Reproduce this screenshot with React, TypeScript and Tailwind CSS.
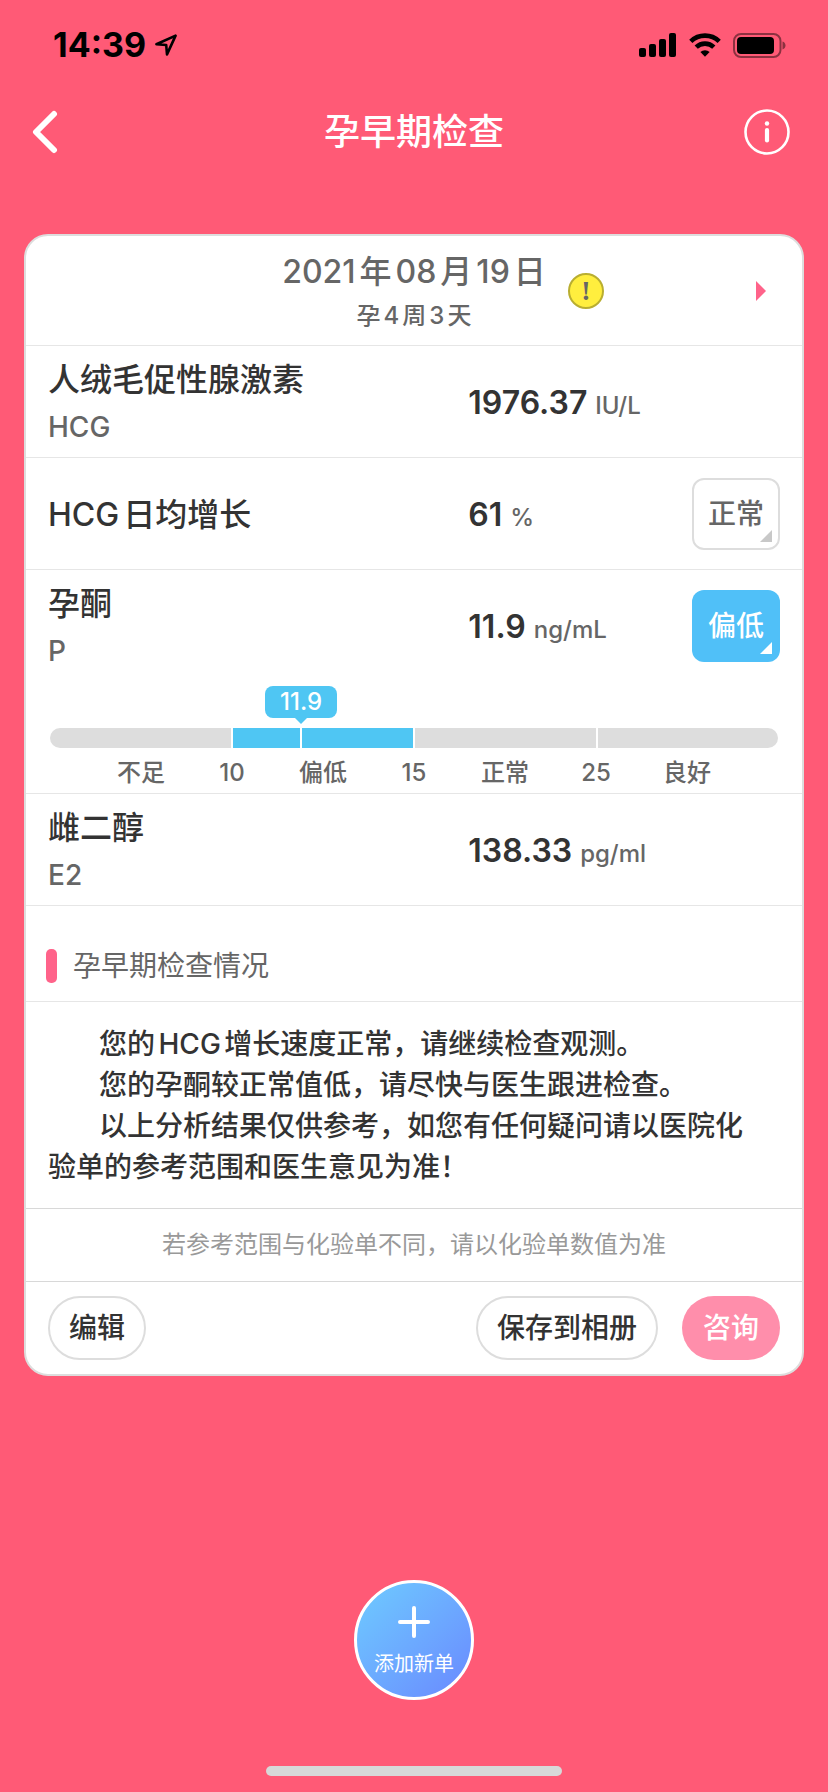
import clsx from 'clsx';
import type { ReactNode } from 'react';

type Level = 'normal' | 'low';

type Item = {
  name: string;
  code?: string;
  value: string;
  unit: string;
  level?: Level;
  label?: string;
};

const hcgItems: Item[] = [
  { name: '人绒毛促性腺激素', code: 'HCG', value: '1976.37', unit: 'IU/L' },
  { name: 'HCG日均增长', value: '61', unit: '%', level: 'normal', label: '正常' },
];

const progesterone: Item = {
  name: '孕酮',
  code: 'P',
  value: '11.9',
  unit: 'ng/mL',
  level: 'low',
  label: '偏低',
};

const estradiol: Item = { name: '雌二醇', code: 'E2', value: '138.33', unit: 'pg/ml' };

const scale = ['不足', '10', '偏低', '15', '正常', '25', '良好'];

function StatusBar() {
  return (
    <div className="flex h-[90px] items-center justify-between pl-[53px] pr-[42px] text-black">
      <div className="flex items-center gap-2">
        <span className="text-[34px] font-bold leading-none">14:39</span>
        <svg width="24" height="24" viewBox="0 0 24 24" fill="none" stroke="currentColor" strokeWidth="2.6" strokeLinejoin="round">
          <path d="M21.6 2.6 2.4 11.2l9.8 .8 .8 9.4Z" />
        </svg>
      </div>
      <div className="flex items-center gap-3">
        <svg width="38" height="24" viewBox="0 0 38 24" fill="currentColor">
          <rect x="0" y="15" width="7" height="9" rx="2" />
          <rect x="10" y="11" width="7" height="13" rx="2" />
          <rect x="20" y="6" width="7" height="18" rx="2" />
          <rect x="30" y="0" width="7" height="24" rx="2" />
        </svg>
        <svg width="32" height="24" viewBox="0 0 32 24" fill="none" stroke="currentColor" strokeWidth="4.6">
          <path d="M1.8 8.4a20.4 20.4 0 0 1 28.4 0" />
          <path d="M7.2 14.2a12.6 12.6 0 0 1 17.6 0" />
          <path d="M11.4 19a6.6 6.6 0 0 1 9.2 0L16 23.8Z" fill="currentColor" stroke="none" />
        </svg>
        <svg width="53" height="25" viewBox="0 0 53 25" fill="none">
          <rect x="1" y="1" width="46.5" height="23" rx="7" stroke="currentColor" strokeOpacity="0.45" strokeWidth="2" />
          <rect x="4" y="4" width="37" height="17" rx="4" fill="currentColor" />
          <path d="M49.5 8.5c2 .6 3 2.2 3 4s-1 3.4-3 4Z" fill="currentColor" fillOpacity="0.45" />
        </svg>
      </div>
    </div>
  );
}

function Header() {
  return (
    <header className="flex h-[84px] items-center justify-between px-8 text-white">
      <button type="button" aria-label="返回" className="flex w-[58px] justify-start">
        <svg width="26" height="44" viewBox="0 0 26 44" fill="none" stroke="currentColor" strokeWidth="6" strokeLinecap="round" strokeLinejoin="round">
          <path d="M22 4 4 22l18 18" />
        </svg>
      </button>
      <h1 className="text-4xl font-medium">孕早期检查</h1>
      <button type="button" aria-label="说明" className="flex w-[58px] justify-center">
        <svg width="46" height="46" viewBox="0 0 46 46" fill="none" stroke="currentColor">
          <circle cx="23" cy="23" r="21.5" strokeWidth="2.6" />
          <circle cx="23" cy="14.5" r="2.2" fill="currentColor" stroke="none" />
          <path d="M23 21v10.500" strokeWidth="4.2" strokeLinecap="round" />
        </svg>
      </button>
    </header>
  );
}

function LevelButton({ level, children }: { level: Level; children: ReactNode }) {
  return (
    <button
      type="button"
      className={clsx(
        'relative block h-[72px] w-[88px] rounded-xl text-[28px] font-medium',
        level === 'low' ? 'bg-[#50c0f8] text-white' : 'border-2 border-[#ddd] bg-white text-[#666]',
      )}
    >
      {children}
      <svg
        className={clsx('absolute', level === 'low' ? 'bottom-2 right-2' : 'bottom-1.5 right-1.5 text-[#c8c8c8]')}
        width="12"
        height="12"
        viewBox="0 0 12 12"
        fill="currentColor"
      >
        <path d="M12 0v12H0Z" />
      </svg>
    </button>
  );
}

function ItemRow({ item, noBorder }: { item: Item; noBorder?: boolean }) {
  return (
    <tr className={clsx('h-28', !noBorder && '[&>*]:border-b [&>*]:border-[#e6e6e6]')}>
      <th scope="row" className="pb-0 pl-[22px] pt-0.5 text-left font-medium">
        <div className="text-[32px] leading-[48px] text-[#333]">{item.name}</div>
        {item.code && <div className="text-[28px] leading-[46px] text-[#666]">{item.code}</div>}
      </th>
      <td className="pb-0 pt-0.5 text-[#666]">
        <span className="mr-2 text-[32px] font-semibold text-[#333]">{item.value}</span>
        <span className="text-2xl font-medium">{item.unit}</span>
      </td>
      <td className="py-0">{item.level && <LevelButton level={item.level}>{item.label}</LevelButton>}</td>
    </tr>
  );
}

function Gauge({ value }: { value: number }) {
  // cada tramo ocupa un cuarto; 偏低 va de 10 a 15
  const position = 25 + ((value - 10) / 5) * 25;

  return (
    <div className="px-6 pt-1">
      <div className="relative h-[42px]">
        <div
          className="absolute top-0 flex h-8 w-[72px] -translate-x-1/2 items-center justify-center rounded-lg bg-[#4fc6f3] text-2xl font-medium text-white"
          style={{ left: `${position}%` }}
        >
          {value}
          <svg className="absolute top-full" width="12" height="6" viewBox="0 0 12 6" fill="#4fc6f3">
            <path d="M0 0h12L6 6Z" />
          </svg>
        </div>
      </div>
      <div className="relative flex h-5 gap-0.5 overflow-hidden rounded-full">
        <div className="flex-1 bg-[#ddd]"></div>
        <div className="flex-1 bg-[#4fc6f3]"></div>
        <div className="flex-1 bg-[#ddd]"></div>
        <div className="flex-1 bg-[#ddd]"></div>
        <div className="absolute inset-y-0 w-0.5 -translate-x-1/2 bg-white" style={{ left: `${position}%` }}></div>
      </div>
      <div className="grid grid-cols-[repeat(16,1fr)] pt-1.5 text-2xl font-medium leading-[38px] text-[#666]">
        <span></span>
        {scale.map((text) => (
          <span key={text} className="col-span-2 whitespace-nowrap text-center">
            {text}
          </span>
        ))}
      </div>
    </div>
  );
}

function ReportCard() {
  return (
    <section className="rounded-[24px] border-2 border-[#ddd] bg-white">
      <div className="grid h-[110px] grid-cols-[1fr_auto_1fr] items-center border-b border-[#e6e6e6] text-[#666]">
        <span></span>
        <div className="pt-1 text-center font-medium">
          <div className="text-[32px] leading-[46px]">2021年08月19日</div>
          <div className="text-2xl leading-[42px]">孕4周3天</div>
        </div>
        <div className="flex items-center justify-between pl-[22px] pr-9">
          <button
            type="button"
            aria-label="提示"
            className="flex size-9 items-center justify-center rounded-full border-2 border-[#b9ae30] bg-[#ffee3e] font-['Liberation_Serif',serif] text-[28px] font-bold leading-none"
          >
            !
          </button>
          <button type="button" aria-label="下一张">
            <svg width="10" height="20" viewBox="0 0 10 20" fill="#ff638a">
              <path d="M0 0v20l10-10Z" />
            </svg>
          </button>
        </div>
      </div>

      <table className="w-full table-fixed border-separate border-spacing-0">
        <colgroup>
          <col className="w-[57%]" />
          <col />
          <col className="w-[110px]" />
        </colgroup>
        <tbody>
          {hcgItems.map((item) => (
            <ItemRow key={item.name} item={item} />
          ))}
          <ItemRow item={progesterone} noBorder />
          <tr className="h-28">
            <td colSpan={3} className="border-b border-[#e6e6e6] p-0 align-top">
              <Gauge value={11.9} />
            </td>
          </tr>
          <ItemRow item={estradiol} />
        </tbody>
      </table>

      <div className="flex h-24 items-center gap-4 border-b border-[#e6e6e6] pl-5 pt-6">
        <span className="h-[34px] w-[11px] rounded-[5px] bg-[#ff638a]"></span>
        <h2 className="text-[28px] text-[#666]">孕早期检查情况</h2>
      </div>

      <div className="border-b border-[#d8d8d8] pb-5 pl-[22px] pr-10 pt-[22px] text-[28px] font-medium leading-[41px] text-[#333]">
        <p className="indent-[51px]">您的HCG增长速度正常，请继续检查观测。</p>
        <p className="indent-[51px]">您的孕酮较正常值低，请尽快与医生跟进检查。</p>
        <p className="indent-[51px]">以上分析结果仅供参考，如您有任何疑问请以医院化验单的参考范围和医生意见为准！</p>
      </div>

      <p className="border-b border-[#d8d8d8] px-4 py-4 text-center text-2xl leading-10 text-[#999]">
        若参考范围与化验单不同，请以化验单数值为准
      </p>

      <div className="flex items-center gap-6 px-[22px] py-3.5 text-[28px] font-medium text-[#333]">
        <button type="button" className="mr-auto h-16 rounded-full border-2 border-[#ddd] px-[19px]">
          编辑
        </button>
        <button type="button" className="h-16 rounded-full border-2 border-[#ddd] px-[19px]">
          保存到相册
        </button>
        <button type="button" className="h-16 rounded-full bg-[#ff8eab] px-[21px] text-white">
          咨询
        </button>
      </div>
    </section>
  );
}

export default function App() {
  return (
    <div
      lang="zh-CN"
      className="flex min-h-screen flex-col bg-[#ff5a76] font-[Inter,'Noto_Sans_CJK_SC',sans-serif] [text-autospace:normal]"
    >
      <StatusBar />
      <Header />
      <main className="px-6 pt-[60px]">
        <ReportCard />
      </main>
      <footer className="mt-auto flex flex-col items-center pb-4 pt-10">
        <button
          type="button"
          className="flex size-[120px] flex-col items-center rounded-full border-[3px] border-white bg-linear-to-br from-[#6ecbff] to-[#6a88ff] pt-[23px] text-xl text-white"
        >
          <svg width="32" height="32" viewBox="0 0 32 32" fill="none" stroke="currentColor" strokeWidth="4" strokeLinecap="round">
            <path d="M16 2v28M2 16h28" />
          </svg>
          <span className="mt-3 leading-7">添加新单</span>
        </button>
        <div className="mt-[66px] h-2.5 w-[296px] rounded-full bg-[#d8d8d8]"></div>
      </footer>
    </div>
  );
}
